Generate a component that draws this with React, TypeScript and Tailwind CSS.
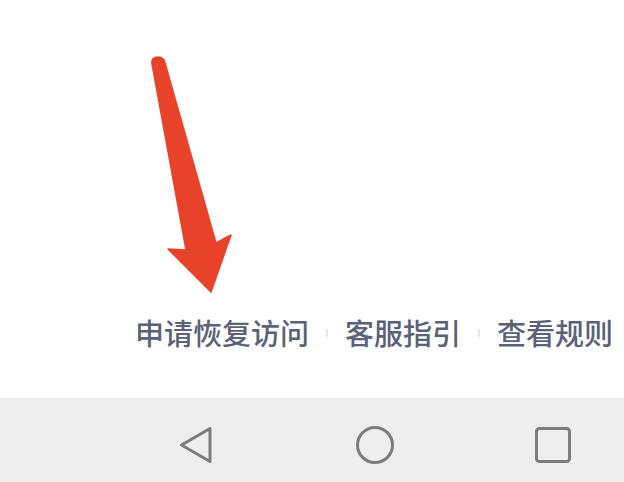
import React from 'react';

const Sep = () => <span className="mx-[17px] inline-block h-[8px] w-[2px] rounded-full bg-[#e2e4e8]" />;

export default function App() {
  return (
    <div className="flex h-[482px] w-[624px] flex-col overflow-hidden bg-white" style={{ fontFamily: '"Noto Sans CJK SC", "Noto Sans", sans-serif' }}>
      {/* content area */}
      <div className="relative flex-1">
        {/* red annotation arrow */}
        <svg className="absolute left-0 top-0" width="624" height="398" viewBox="0 0 624 398">
          <path
            d="M152 64 Q151 57 158 57 Q164 57 165 63 L216 243 L231 235 L211 292 L168 249 L186 250 Z"
            fill="#e8432a"
            stroke="#e8432a"
            strokeWidth="1.5"
            strokeLinejoin="round"
          />
        </svg>
        <div className="flex items-center whitespace-nowrap pl-[135px] pt-[318px] text-[29px] font-medium leading-[29px] text-[#5a6277]">
          <span>申请恢复访问</span>
          <Sep />
          <span>客服指引</span>
          <Sep />
          <span>查看规则</span>
        </div>
      </div>
      {/* android nav bar */}
      <div className="flex h-[84px] items-center bg-[#eeeeee] pt-[10px]">
        <svg className="ml-[178px]" width="36" height="40" viewBox="0 0 36 40">
          <path d="M32 3.5 L32 36.5 L3.5 20 Z" fill="none" stroke="#7c7c7c" strokeWidth="3" strokeLinejoin="round" />
        </svg>
        <svg className="ml-[141px]" width="40" height="40" viewBox="0 0 40 40">
          <circle cx="20" cy="20" r="17.5" fill="none" stroke="#7c7c7c" strokeWidth="3" />
        </svg>
        <svg className="ml-[140px]" width="36" height="36" viewBox="0 0 36 36">
          <rect x="1.5" y="1.5" width="33" height="33" rx="3" fill="none" stroke="#7c7c7c" strokeWidth="3" />
        </svg>
      </div>
    </div>
  );
}
